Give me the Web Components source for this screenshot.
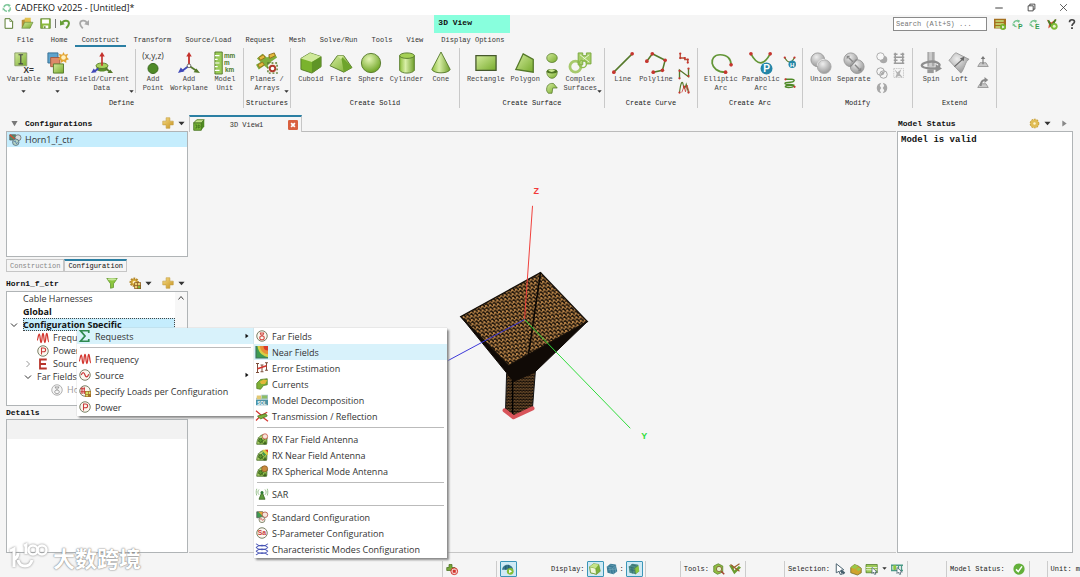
<!DOCTYPE html>
<html lang="en">
<head>
<meta charset="utf-8">
<title>CADFEKO v2025 - [Untitled]*</title>
<style>
  html, body { margin: 0; height: 100%; }
  body { overflow: hidden; background: #f5f5f5; }
</style>
</head>
<body>
<cad-app></cad-app>
<script>
const GREEN = '#8dbb3f', DARK = '#55792a', RED = '#c5362f';
const DEFS = `<defs>
<linearGradient id="g" x1="0" y1="0" x2="1" y2="1"><stop offset="0" stop-color="#d3eb9c"/><stop offset="1" stop-color="#77ab2c"/></linearGradient>
<radialGradient id="r" cx=".4" cy=".3" r=".7"><stop offset="0" stop-color="#e4f5b4"/><stop offset="1" stop-color="#6fa526"/></radialGradient>
<linearGradient id="c" x1="0" x2="1"><stop offset="0" stop-color="#8fc03e"/><stop offset=".4" stop-color="#d9efa8"/><stop offset="1" stop-color="#6f9f2c"/></linearGradient>
<radialGradient id="k" cx=".4" cy=".3" r=".8"><stop offset="0" stop-color="#eee"/><stop offset="1" stop-color="#8d8d8d"/></radialGradient>
<linearGradient id="y" x1="0" y1="0" x2="1" y2="1"><stop offset="0" stop-color="#f7dc83"/><stop offset="1" stop-color="#c69322"/></linearGradient></defs>`;
const dots = (...p) => p.map(([x, y, r = 1.5]) => `<circle cx="${x}" cy="${y}" r="${r}" fill="${RED}"/>`).join('');
const letter = (t, x, y, s, c) => `<text x="${x}" y="${y}" font-family="Liberation Sans" font-size="${s}" font-weight="700" fill="${c}" text-anchor="middle">${t}</text>`;
const rx = extra => `<path d="M1 15c0-7 4-12 9-13l5 4c-1 4 0 7-1 9z" fill="url(#g)" stroke="#3f6420"/><path d="M3 11l8-7M5 14l8-7M3 6l8 9" stroke="#3f6420"/><circle cx="6" cy="10" r="2.5" fill="#5d9a2b" stroke="#2f5316"/>${extra}`;
const ring = `<circle cx="8" cy="8" r="7" fill="#fbf7ef" stroke="#6c7256" stroke-width="1.2"/>`;
const swirl = c => `<path d="M3 7a5 5 0 0 1 8-3M13 7a5 5 0 0 1-1 5M8 13a5 5 0 0 1-5-3" fill="none" stroke="${c}" stroke-width="2.4"/><path d="M9 1l5 2-3 4zM15 10l-4 5-2-4zM1 12V7l4 3z" fill="${c}"/>`;

/* Small icons use a 16-unit box, ribbon icons a 24-unit box. */
const SMALL = {
  logo: swirl('#7fc79b'),
  new: `<path d="M3 1h7l4 4v10H3z" fill="#fff" stroke="${DARK}" stroke-width="1.4"/><path d="M10 1v4h4" fill="none" stroke="${DARK}"/>`,
  open: `<path d="M1 14V4l5-1 2 2h5v9z" fill="#b7913a"/><path d="M5 1h8v7H5z" fill="#e2c14e"/><path d="M1 15l4-8h11l-4 8z" fill="url(#g)" stroke="${DARK}" stroke-width=".7"/>`,
  save: `<path d="M1 1h14v14H1z" fill="${GREEN}" stroke="${DARK}"/><path d="M3 2h10v6H3zM5 11h7v4H5z" fill="#fff"/><path d="M6 12h2v3H6z" fill="${DARK}"/>`,
  undo: `<path d="M3 8c1-5 10-6 10 0 0 3-2 5-4 7" fill="none" stroke="#659d35" stroke-width="3"/><path d="M0 3v8l7-2z" fill="#659d35"/>`,
  redo: `<path d="M13 8C12 3 3 2 3 8c0 3 2 5 4 7" fill="none" stroke="#a9a9a9" stroke-width="2.6"/><path d="M16 3v8l-7-2z" fill="#a9a9a9"/>`,
  sheet: `<path d="M0 1h16v13H0z" fill="#a5701f"/><path d="M2 3h11v2H2zM2 7h11v2H2zM2 11h9v2H2z" fill="#c7e57c"/><circle cx="12" cy="12" r="4" fill="#75b52e"/><path d="M11 10l3 2-3 2z" fill="#fff"/>`,
  swirlP: `<g transform="scale(.85)">${swirl('#74c48e')}</g><circle cx="12" cy="11" r="5" fill="#f5f5f5"/>${letter('P', 12, 15, 10, '#329c52')}`,
  swirlE: `<g transform="scale(.85)">${swirl('#74c48e')}</g><circle cx="12" cy="11" r="5" fill="#f5f5f5"/>${letter('E', 12, 15, 10, '#329c52')}`,
  globe: `<path d="M1 2l6 4 7-5-3 7 4 5-7-3-5 4 1-6z" fill="#d5512f"/><path d="M3 3l4 8 6-9" stroke="#478229" stroke-width="2.4" fill="none"/><circle cx="11" cy="11" r="4.5" fill="#7dbb36"/><circle cx="11" cy="11" r="2" fill="#e7f5c8"/>`,
  help: `<path d="M4 5c0-5 8-5 8-.5 0 3-4 3-4 6.500" fill="none" stroke="#444" stroke-width="2.6"/><path d="M6.500 13h3v3h-3z" fill="#444"/>`,
  ellipse: `<ellipse cx="8" cy="8" rx="7" ry="6" fill="url(#g)" stroke="${DARK}"/>`,
  bowl: `<path d="M1 6c0 12 14 12 14 0z" fill="url(#g)" stroke="${DARK}"/><ellipse cx="8" cy="5.500" rx="7" ry="3" fill="#4e7423"/><path d="M3 5c3-3 7-2 9 0-3 2-6 2-9 0" fill="#c8e68e"/>`,
  patch: `<path d="M1 12C0 5 4 1 10 2l5 6-6 0-1 7H3z" fill="url(#g)" stroke="${DARK}"/>`,
  zig1: `<path d="M3 2v6h6v2h4v4" fill="none" stroke="#b5533a" stroke-width="1.800"/>${dots([3,2],[3,8],[9,8],[13,14],[13,10])}`,
  zig2: `<path d="M2 15V4l12 9V2" fill="none" stroke="${DARK}" stroke-width="1.8"/>${dots([2,15],[2,5],[14,12],[14,2])}`,
  zig3: `<path d="M2 14c2-16 4-16 5-10s2 6 4-1l3 11" fill="none" stroke="${DARK}" stroke-width="1.5"/><path d="M5 14l3-8 2 7 2-9 3 10" fill="none" stroke="${RED}"/>${dots([2,14],[8,6],[14,14])}`,
  hyper: `<path d="M1 2c4 8 9 8 13 0" fill="none" stroke="${DARK}" stroke-width="1.5"/><circle cx="11" cy="11" r="5" fill="#2386a8"/>${letter('H', 11, 14, 8, '#fff')}${dots([1,2],[14,2])}`,
  helix: `<path d="M2 3h8c6 0 4 4-2 4-9 0-9 3 0 3 8 0 6 4-2 4-6 0-6-3 2-3h6" fill="none" stroke="#4f8a28" stroke-width="1.800"/>${dots([2,3],[14,13])}`,
  sub: `<circle cx="10" cy="10" r="5" fill="#a9a9a9"/><circle cx="6" cy="6" r="5" fill="#f8f8f8" stroke="#999"/>`,
  inter: `<circle cx="6" cy="6" r="5" fill="none" stroke="#a5a5a5" stroke-width="1.300"/><circle cx="10" cy="10" r="5" fill="none" stroke="#a5a5a5" stroke-width="1.300"/><path d="M6 11c0-3 2-5 5-5 0 3-2 5-5 5" fill="#aaa"/>`,
  split: `<path d="M7 1c-8 1-8 13 0 14l-2-4 2-3-2-3zM9 1c8 1 8 13 0 14l2-4-2-3 2-3z" fill="#a8a8a8"/>`,
  grid: `<path d="M3 1v14M13 1v14M1 3h5M1 7h14M1 11h5M10 3h5M10 11h5M1 15h14" stroke="#9c9c9c" stroke-width="2"/>`,
  clip: `<path d="M1 2h13v12H1z" fill="none" stroke="#bcbcbc" stroke-dasharray="2 1"/><path d="M2 3l4 4 5-4-2 6 4 5-5-2-5 2 2-5z" fill="#b2b2b2"/>`,
  sweep1: `<path d="M1 14l3-5h8l3 5z" fill="#c9c9c9" stroke="#888"/><path d="M8 11V3" stroke="#777" stroke-width="1.500"/><path d="M5 4l3-4 3 4z" fill="#777"/>`,
  sweep2: `<path d="M1 14l3-5h8l3 5z" fill="#c9c9c9" stroke="#888"/><path d="M5 12c0-6 3-8 6-8" fill="none" stroke="#888" stroke-width="2.400"/><path d="M10 0l5 4-5 4z" fill="#888"/>`,
  plus: `<path d="M5.500 1h5v4.500H15v5h-4.500V15h-5v-4.500H1v-5h4.500z" fill="url(#y)" stroke="#c39c40" stroke-width=".8"/>`,
  down: `<path d="M1 4h14l-7 8z" fill="#333"/>`,
  downgrey: `<path d="M1 2h14l-7 12z" fill="#777"/>`,
  right: `<path d="M4 2l8 6-8 6z" fill="#111"/>`,
  rightgrey: `<path d="M3 1l10 7-10 7z" fill="#888"/>`,
  funnel: `<path d="M1 2h14l-5 7v5l-4 1V9z" fill="#8cc63f" stroke="#5f942b"/><ellipse cx="8" cy="3" rx="6" ry="1.500" fill="#c7e99b"/>`,
  gear: `<circle cx="8" cy="8" r="5.500" fill="#d9ae3c" stroke="#c39a35" stroke-width="3" stroke-dasharray="2.300 1.200"/><circle cx="8" cy="8" r="6" fill="#e0bd55"/><circle cx="8" cy="8" r="1.800" fill="#fff3cc"/>`,
  geargrid: `<circle cx="7" cy="7" r="4.800" fill="#d9ae3c" stroke="#b4872a" stroke-width="3" stroke-dasharray="2.300 1.200"/><circle cx="7" cy="7" r="1.800" fill="#fff3cc"/><path d="M7 7h9v9H7z" fill="#8a5a22"/><path d="M8 8h3v3H8zM12 8h3v3h-3zM8 12h3v3H8z" fill="#e9cf73"/><path d="M12 12h3v3h-3z" fill="#7cb53a"/>`,
  horn: `<path d="M1 1h8v7H1z" fill="#4e8f6a" stroke="#555"/><path d="M1 1l8 7" stroke="#d44b32" stroke-width="2"/><circle cx="12" cy="5" r="4" fill="#d6dcdc" stroke="#666"/><circle cx="9" cy="11" r="4.300" fill="#b5d3c2" stroke="#47627a"/><path d="M6 11l2-2 2 4 2-2" fill="none" stroke="#3f6ba5"/>`,
  cube: `<path d="M1 5l4-4h10v9l-4 5H1z" fill="#4f8a22"/><path d="M1 5h10v10H1z" fill="#78b438" stroke="#456f20"/><path d="M1 5l4-4h10l-4 4z" fill="#c2e388" stroke="#456f20"/><path d="M3 8h2v4H3M7 8c3 0 3 4 0 4z" fill="none" stroke="#3c6a1a"/>`,
  close: `<rect width="16" height="16" rx="2" fill="#d9603f"/><path d="M5 5l6 6M11 5l-6 6" stroke="#fff" stroke-width="2.800"/>`,
  wave: `<path d="M0 11c1.500 0 1.500-8 3-8s1 11 2.500 11S6.500 2 8 2s1 12 2.500 12S11.500 2 13 2s1 11 3 11" fill="none" stroke="#d3352e" stroke-width="1.700"/>`,
  power: ring + `<path d="M6 12.500V4h2.500c4 0 4 5 0 5H6" fill="none" stroke="#c93a3a" stroke-width="1.400"/>`,
  E: `<path d="M13 2H4v12h9M4 8h8" fill="none" stroke="#b8352c" stroke-width="2.400"/>`,
  sigma: `<path d="M13 4V1H2l6 7-6 7h11v-3" fill="none" stroke="#2f8a50" stroke-width="2.300"/>`,
  source: ring + `<path d="M3 8c2-5 4-3 5 0s3 4 5-1" fill="none" stroke="#c93a3a" stroke-width="1.600"/>`,
  loads: ring + `<path d="M4 3v9M2 5h6M2 9h6M7 3v9" stroke="#c93a3a" stroke-width="1.500"/><path d="M8 8h8v8H8z" fill="#a4712a"/><path d="M9 9h3v3H9zM13 9h2v3h-2zM9 13h3v2H9z" fill="#d6e36c"/>`,
  far: ring + `<path d="M5 4h6M6 4c0 4 4 4 4 0M8 8c-4 0-4 5 0 5s4-5 0-5" fill="none" stroke="#d14a42" stroke-width="1.400"/>`,
  fargrey: `<circle cx="8" cy="8" r="7" fill="#f6f6f6" stroke="#999"/><path d="M5 4h6M6 4c0 4 4 4 4 0M8 8c-4 0-4 5 0 5s4-5 0-5" fill="none" stroke="#999" stroke-width="1.300"/>`,
  near: `<path d="M0 0h16v16H0z" fill="#3e9c51"/><path d="M2 0h14v15C11 14 3 10 2 0z" fill="#d9cf45"/><path d="M5 0h11v11C11 11 6 7 5 0z" fill="#e88f37"/><path d="M10 0h6v6c-4 0-6-2-6-6z" fill="#d83c2d"/><path d="M0 0v16h16" fill="none" stroke="#3c7161" stroke-width="1.500"/>`,
  error: `<path d="M2 2v12M0 2h4M0 14h4M8 4v9M6 4h4M6 13h4M14 1v10M12 1h4M12 11h4" stroke="#7a4a35" stroke-width="1.300"/><path d="M2 9l6-2 6-2" stroke="#d3352e" stroke-width="2" fill="none"/>`,
  currents: `<path d="M1 7l5-5 9-1v8l-5 1-4 5-5-1z" fill="#7fb035" stroke="#4d7b20"/><path d="M5 5l5-3 5 1-3 5H7z" fill="#e3b73a"/>`,
  decomp: `<path d="M0 5h7V1h9v13H0z" fill="#a8c6cf"/><path d="M1 2h6v5H1z" fill="#e3c873"/><path d="M8 2h7v4H8z" fill="#8dbd63"/><path d="M0 8h16v7H0z" fill="#4c93a4"/>${letter('SOL', 8, 14, 6, '#fff')}`,
  trans: `<path d="M0 1l7 6 8-4M0 14l6-6M8 9l8 6" stroke="#d3352e" stroke-width="1.600" fill="none"/><path d="M2 8l11-3 2 3-9 4z" fill="#7db13c" stroke="#46701f"/>`,
  rxfar: rx(`<circle cx="12" cy="4.500" r="3.500" fill="#f6e5da" stroke="#c94d40"/><path d="M10 15l2-5 2 5z" fill="#3f6420"/>`),
  rxnear: rx(`<path d="M9 1h7v7H9z" fill="#d9cf45"/><path d="M12 1h4v4z" fill="#d83c2d"/><path d="M9 3l5 5H9z" fill="#3e9c51"/><path d="M10 15l2-5 2 5z" fill="#3f6420"/>`),
  rxsph: rx(`<circle cx="11.500" cy="5" r="4" fill="#c98a3f" stroke="#8a5b22"/><path d="M10 15l2-5 2 5z" fill="#3f6420"/>`),
  sar: `<path d="M8 5l4 10H4z" fill="#5d9a3b" stroke="#33601c"/><circle cx="8" cy="6" r="2" fill="#2e7a36"/><path d="M4 2c-2 2-2 5 0 7M12 2c2 2 2 5 0 7M1 1c-1 3-1 6 0 9M15 1c1 3 1 6 0 9" fill="none" stroke="#8fba82" stroke-width="1.200"/>`,
  std: `<path d="M1 1h8v8H1z" fill="#3e9c51" stroke="#555"/><path d="M3 1h6v6z" fill="#e0a63a"/><circle cx="12" cy="5" r="3.700" fill="#f6e5da" stroke="#a8483e"/><circle cx="8" cy="11.500" r="4" fill="#f1ece0" stroke="#6c7256"/><path d="M5.500 11.500c1-3 2-1 2.500 0s1.500 2 2.500-1" fill="none" stroke="#c93a3a"/>`,
  spar: ring + letter('Sa', 8, 11, 9, '#c93a3a'),
  modes: `<path d="M0 1c4 4 12 4 16 0M0 6c4-4 12-4 16 0M0 6c4 4 12 4 16 0M0 11c4-4 12-4 16 0M0 11c4 4 12 4 16 0M0 16c4-4 12-4 16 0" fill="none" stroke="#4754b5" stroke-width="1.400"/>`,
  stop: `<path d="M1 10V6h3V2h4v4h4v4z" fill="#78a93a" stroke="#4a6e20"/><circle cx="11" cy="11" r="4.500" fill="#f4d6d2" stroke="#d3352e" stroke-width="1.300"/><path d="M9 9h4v4H9z" fill="#d3352e"/>`,
  dome: `<path d="M0 9c1-9 14-9 15 0z" fill="#35758b"/><path d="M5 9V4M9 9V3" stroke="#1f4e60"/><circle cx="11" cy="11" r="4.500" fill="#86bd35"/><path d="M9.500 8.500l4 2.500-4 2.500z" fill="#fff"/>`,
  solid: `<path d="M1 5l5-4 7 1 2 9-5 4-8-2z" fill="#7db13a" stroke="#6d982f"/><path d="M1 5l8 2 1 8-8-2z" fill="#f0f7d8" stroke="#6d982f"/><path d="M1 5l5-4 7 1-4 5z" fill="#c5e48a"/>`,
  mesh: `<path d="M1 5l5-4 7 1 2 9-5 4-8-2z" fill="#3a7c97"/><path d="M1 5l8 2 5-4M9 7l1 8M4 2l7 2M3 9l11-1M5 6l1 8M12 5l1 8" stroke="#7fb0c2" fill="none" stroke-width=".7"/>`,
  meshsolid: `<path d="M1 5l5-4 7 1 2 9-5 4-8-2z" fill="#4d8d85"/><path d="M8 7l6-4 1 8-5 4z" fill="#8cc63f"/><path d="M1 5l8 2 5-4M9 7l1 8M4 2l7 2M3 9l6 1M5 6l1 8" stroke="#28586a" fill="none" stroke-width=".7"/>`,
  zoom: `<path d="M1 4l6-3 6 3v8l-7 3-5-3z" fill="#8fbd42" stroke="#5a812a"/><circle cx="8" cy="8" r="3.500" fill="#e5f1cc" stroke="#795525"/><path d="M11 11l4 4" stroke="#a2442f" stroke-width="2"/>`,
  brush: `<path d="M0 3l7 12 9-9-3-2-6 6-2-7z" fill="#6a9c2f"/><path d="M2 2l12 9M5 7l9-6" stroke="#9d5f2b" stroke-width="1.500"/>`,
  cursor: `<path d="M3 1l10 8-4 1 2 5-3 0-1-4-4 2z" fill="#fff" stroke="#47606d" stroke-width="1.300"/><path d="M9 10l5 4" stroke="#47606d" stroke-width="3"/>`,
  parts: `<path d="M1 6l5-4 5 2 4 3v6l-5 3-9-3z" fill="#cfa42d" stroke="#6a6a22"/><path d="M1 6l5-4 5 2-4 4zM8 8l4-2 3 2-4 3z" fill="#98c84a"/>`,
  table: `<path d="M0 2h15v11H0z" fill="#9cc956" stroke="#4f7b2a"/><path d="M0 6h15M0 9h15" stroke="#fff"/><path d="M8 6l7 6-3 0 1 3h-2l-1-3-2 2z" fill="#fff" stroke="#47606d"/>`,
  picks: `<path d="M1 2v9M5 2v9M10 2v9M14 2v9M0 3h16M0 10h16" stroke="#4b9a86" stroke-width="1.700"/><path d="M3 3h4v6H3z" fill="#8cc63f"/><path d="M8 6l7 6-3 0 1 3h-2l-1-3-2 2z" fill="#fff" stroke="#47606d"/>`,
  ok: `<circle cx="8" cy="8" r="7.500" fill="#63b03a"/><path d="M4 8.500l3 3 5-7" fill="none" stroke="#fff" stroke-width="2"/>`,
  min: `<path d="M2 8h12" stroke="#333" stroke-width="1.500"/>`,
  max: `<path d="M2 5h9v9H2zM5 5V2h9v9h-3" fill="none" stroke="#333" stroke-width="1.500"/>`,
  x: `<path d="M2 2l12 12M14 2L2 14" stroke="#333" stroke-width="1.400"/>`,
  up: `<path d="M3 11l5-6 5 6" fill="none" stroke="#444" stroke-width="2"/>`,
  open2: `<path d="M2 5l6 6 6-6" fill="none" stroke="#333" stroke-width="2"/>`,
  shut: `<path d="M5 2l6 6-6 6" fill="none" stroke="#999" stroke-width="2"/>`
};
const BIG = {
  variable: `<path d="M2 1h13v14H2z" fill="url(#g)" stroke="#8a9d68"/><path d="M8.500 3v10M6 3h5M6 13h5" stroke="#444" stroke-width="1.300"/>${letter('X=', 17, 23, 9, '#333')}`,
  media: `<path d="M1 1h11v11H1z" fill="#5ea3cd" stroke="#356f93"/><path d="M4 6h10v10H4z" fill="#dd8a6a" stroke="#a3583b"/><path d="M18 0l1.500 3L23 2l-1.500 3.500L24 8l-3 1 0 3-3-2-3 2v-3l-3-1 2-2.500L13 2l3.500 1z" fill="#e3a332"/><circle cx="18" cy="6" r="2.500" fill="#fff0bd"/><path d="M7 13h11v10H7z" fill="url(#g)" stroke="${DARK}"/>`,
  field: `<path d="M6 15v4c2 3 10 3 12 0v-4z" fill="#5c8d2b"/><ellipse cx="12" cy="15" rx="6.500" ry="3" fill="#a8d25b" stroke="${DARK}"/><path d="M12 15V4" stroke="#c4302b" stroke-width="1.800"/><path d="M9 5l3-5 3 5z" fill="#c4302b"/><path d="M8 18l-4 3" stroke="#4149b8" stroke-width="2"/><path d="M0 23l3-5 3 4z" fill="#4149b8"/><path d="M16 18l4 3" stroke="#55792a" stroke-width="2"/><path d="M24 23l-6 0 3-4z" fill="#55792a"/>`,
  point: `<text x="12" y="8" font-family="Open Sans" font-size="9" fill="#333" text-anchor="middle">(x,y,z)</text><circle cx="12" cy="18" r="5.500" fill="#4f8a28" stroke="#36651a"/>`,
  workplane: `<path d="M12 15V4" stroke="#c4302b" stroke-width="2"/><path d="M9 5l3-5 3 5z" fill="#c4302b"/><path d="M12 15l-8 6" stroke="#4149b8" stroke-width="2"/><path d="M0 23l3-6 4 4z" fill="#4149b8"/><path d="M12 15l9 6" stroke="#55792a" stroke-width="2"/><path d="M24 23l-7-1 3-4z" fill="#55792a"/><circle cx="12" cy="15" r="2" fill="#fff" stroke="#666"/>`,
  unit: `<path d="M1 0h8v24H1z" fill="#9acb58" stroke="${DARK}"/><path d="M1 4h5M1 8h3M1 12h5M1 16h3M1 20h5" stroke="#fff" stroke-width="1.300"/>${letter('mm', 17, 6, 7, '#4d7b2a')}${letter('m', 14, 14, 7, '#4d7b2a')}${letter('km', 17, 22, 7, '#4d7b2a')}`,
  planes: `<path d="M1 7l6-5 5 4 8-5 3 5-7 5 4 5-6 3-5-4-6 4-3-5 5-3z" fill="#7fae3b"/><path d="M3 6l5-3 2 3-5 3zM14 3l6-2 1 3-6 3zM2 14l5-3 2 3-5 3z" fill="#e3b93c" stroke="#94701f"/><path d="M13 12h10v11H13z" fill="#f3efe3" stroke="${DARK}" stroke-width="1.500" stroke-dasharray="2 2"/><circle cx="18" cy="18" r="3" fill="#fff" stroke="#b13b2c" stroke-width="2"/>`,
  cuboid: `<path d="M1 7l10-6 12 4v11l-10 7-12-4z" fill="#7ab32d" stroke="${DARK}"/><path d="M1 7l12 4 10-6-12-4z" fill="#cfe99a"/><path d="M13 11l10-6v11l-10 7z" fill="#5f9426"/>`,
  flare: `<path d="M0 15l8-11 7 0 9 13-9 5z" fill="url(#g)" stroke="${DARK}"/><path d="M12 4l12 13-9 5z" fill="#6ea42c"/><path d="M8 4h7l-3 4z" fill="#d3eb9c"/>`,
  sphere: `<circle cx="12" cy="12" r="10.500" fill="url(#r)" stroke="${DARK}"/>`,
  cylinder: `<path d="M4 4v16c2 4 14 4 16 0V4z" fill="url(#c)" stroke="${DARK}"/><ellipse cx="12" cy="4" rx="8" ry="3" fill="#a5d055" stroke="${DARK}"/>`,
  cone: `<path d="M12 0L2 19c2 5 18 5 20 0z" fill="url(#c)" stroke="${DARK}"/>`,
  rectangle: `<path d="M1 4h22v16H1z" fill="url(#g)" stroke="#46592c" stroke-width="1.400"/>`,
  polygon: `<path d="M10 2l11 6v14L2 19z" fill="url(#g)" stroke="${DARK}" stroke-width="1.400"/>`,
  complex: `<circle cx="7" cy="16" r="6" fill="#f5f5f5" stroke="#a7c96d" stroke-width="3"/><path d="M10 1h5v3h4V1h5v12h-5v-3h-4v4h-5z" fill="#a7cf69" stroke="#78a63d"/><path d="M12 3l10 8M22 3l-10 8" stroke="#eef6df"/><circle cx="15" cy="13" r="4" fill="none" stroke="#8dbb4a" stroke-width="1.500"/>`,
  line: `<path d="M2 22L22 2" stroke="${DARK}" stroke-width="1.700"/>${dots([2,22,2],[22,2,2])}`,
  polyline: `<path d="M2 10l6-8 14 7-3 11-10 2" fill="none" stroke="${DARK}" stroke-width="1.700"/>${dots([2,10,2],[8,2,2],[22,9,2],[19,20,2],[9,22,2])}`,
  elliptic: `<path d="M17 22C-1 22-2 3 11 3c8 0 12 5 12 11" fill="none" stroke="#639637" stroke-width="1.900"/>${dots([17,22,2],[23,14,2])}`,
  parabolic: `<path d="M1 2c7 13 14 13 21 0" fill="none" stroke="#639637" stroke-width="1.900"/>${dots([1,2,2],[22,2,2])}<circle cx="18" cy="18" r="6.500" fill="#2386a8"/>${letter('P', 18, 22, 11, '#fff')}`,
  union: `<circle cx="8.500" cy="8.500" r="7.500" fill="url(#k)" stroke="#999"/><circle cx="15.500" cy="16" r="7.500" fill="url(#k)" stroke="#aaa"/><path d="M8 15c0-4 3-7 8-7" fill="none" stroke="#eee"/>`,
  separate: `<circle cx="8.500" cy="8.500" r="7.500" fill="url(#k)" stroke="#999"/><circle cx="15.500" cy="16" r="7.500" fill="url(#k)" stroke="#999"/><path d="M6 6l5 5M18 19l-5-5M15 8l-7 8" stroke="#888" stroke-width="1.500"/><path d="M4 8V4h4zM20 17v4h-4z" fill="#888"/>`,
  spin: `<path d="M8 0h8v16H8z" fill="#aaa"/><path d="M10 0h3v16h-3z" fill="#ccc"/><path d="M19 17c7-4-3-8-11-6s-9 6 3 7h8" fill="none" stroke="#8e8e8e" stroke-width="2.600"/><path d="M17 13l7 5-7 4z" fill="#8e8e8e"/><path d="M8 19h7v4H8z" fill="#999"/>`,
  loft: `<path d="M1 9C4 7 6 1 9 1l14 7c-4 1-5 11-9 15z" fill="url(#k)" stroke="#999"/><path d="M7 16L17 7" stroke="#666" stroke-width="1.300"/><path d="M18 5l-1 5-4-3z" fill="#666"/>`
};

/* Base class: renders its template once into an open shadow root. */
class Base extends HTMLElement {
  connectedCallback() {
    if (this.shadowRoot) return;
    const t = document.createElement('template');
    t.innerHTML = `<style>*{box-sizing:border-box}button{font:inherit;color:inherit;background:none;border:0;padding:0;margin:0;text-align:left}${this.css()}</style>${this.html()}`;
    this.attachShadow({ mode: 'open' }).append(t.content.cloneNode(true));
  }
  at(n, d = '') { return this.getAttribute(n) ?? d; }
}

customElements.define('cad-icon', class extends Base {
  css() { const s = this.at('size', '12'); return `:host{display:inline-block;flex:none;width:${s}px;height:${s}px}svg{display:block;width:100%;height:100%;overflow:visible}`; }
  html() {
    const n = this.at('name'), big = n in BIG, u = big ? 24 : 16;
    return `<svg viewBox="0 0 ${u} ${u}" aria-hidden="true">${DEFS}${big ? BIG[n] : SMALL[n]}</svg>`;
  }
});

customElements.define('title-bar', class extends Base {
  css() { return `:host{display:flex;align-items:center;height:15px;background:#fff;font:9px "Open Sans",sans-serif;color:#111;padding:0 12px 0 2px}
    span{flex:1;margin-left:3px}.w{display:flex;gap:23px}button{display:flex}`; }
  html() { return `<cad-icon name="logo" size="10"></cad-icon><span><slot></slot></span>
    <div class="w"><button aria-label="Minimize"><cad-icon name="min" size="10"></cad-icon></button><button aria-label="Restore"><cad-icon name="max" size="9"></cad-icon></button><button aria-label="Close"><cad-icon name="x" size="9"></cad-icon></button></div>`; }
});

customElements.define('ribbon-tab', class extends Base {
  css() { return `:host{display:block}button{display:block;height:14px;line-height:14px;padding:0 7px;border-bottom:2px solid transparent;white-space:nowrap}
    :host([active]) button{border-color:#2b7fa3}`; }
  html() { return `<button><slot></slot></button>`; }
});

customElements.define('ribbon-header', class extends Base {
  css() { return `:host{display:flex;height:33px;color:#333}
    .q{display:flex;align-items:center;height:18px;padding:0 0 2px 3px;gap:7px}
    .q i{width:1px;height:9px;background:#777;margin:0 -3px}
    .q button{display:flex}
    .tabs{display:flex;padding-left:10px;height:15px}.tabs :first-child{margin-right:3px}
    .ctx{margin-left:4px}
    .ctx b{display:block;height:18px;line-height:15px;padding-left:4px;background:#88ffdd;color:#111;font-size:8px;margin-right:1px}
    .r{margin-left:auto;display:flex;align-items:center;height:18px;padding-right:3px;gap:6px}
    input{width:94px;height:14px;border:1px solid #8a8a8a;background:#fff;font:inherit;padding:0 2px;margin-right:1px;border-radius:0}
    input::placeholder{color:#777;opacity:1}.r button:last-child{margin-left:3px}.r button{display:flex}`; }
  html() {
    const b = (n, l, s = 11) => `<button aria-label="${l}"><cad-icon name="${n}" size="${s}"></cad-icon></button>`;
    const t = (s, a = '') => `<ribbon-tab ${a}>${s}</ribbon-tab>`;
    return `<div><div class="q">${b('new','New')}${b('open','Open',12)}${b('save','Save')}<i></i>${b('undo','Undo')}${b('redo','Redo')}</div>
      <div class="tabs">${t('File')}${t('Home')}${t('Construct','active')}${['Transform','Source/Load','Request','Mesh','Solve/Run','Tools','View'].map(x => t(x)).join('')}</div></div>
      <div class="ctx"><b>3D View</b>${t('Display Options')}</div>
      <div class="r"><input aria-label="Search" placeholder="Search (Alt+S) ...">${b('sheet','Solver',12)}${b('swirlP','POSTFEKO')}${b('swirlE','EDITFEKO')}${b('globe','Online',12)}${b('help','Help',10)}</div>`;
  }
});

customElements.define('ribbon-tool', class extends Base {
  css() { return `:host{display:block}button{position:relative;display:flex;flex-direction:column;align-items:center;text-align:center;line-height:9px;white-space:pre}
    cad-icon{margin-bottom:1px}.a{position:absolute;right:-5px;top:37px}:host([arrow=mid]) .a{right:auto}`; }
  html() { return `<button><cad-icon name="${this.at('icon')}" size="22"></cad-icon><span>${this.at('label').replace('|', '\n')}</span>${this.hasAttribute('arrow') ? '<cad-icon class="a" name="down" size="5"></cad-icon>' : ''}</button>`; }
});

customElements.define('tool-column', class extends Base {
  css() { return `:host{display:flex;flex-direction:column;gap:3px}:host([wide]){gap:9px;padding-top:4px}button{display:flex}`; }
  html() { return this.at('icons').split(' ').map(n => `<button aria-label="${n}"><cad-icon name="${n}" size="12"></cad-icon></button>`).join(''); }
});

customElements.define('ribbon-group', class extends Base {
  css() { return `:host{display:flex;flex-direction:column;min-width:${this.at('width')}px;height:60px;border-right:1px solid #c9c9c9;padding:4px 4px 0}
    .t{display:flex;justify-content:space-around;flex:1}.n{text-align:center;line-height:9px;color:#222;white-space:nowrap;margin:0 -3px}
    ::slotted(hr){width:1px;height:44px;margin:-3px 0 0;border:0;background:#c9c9c9}`; }
  html() { return `<div class="t"><slot></slot></div><div class="n">${this.at('name')}</div>`; }
});

customElements.define('cad-ribbon', class extends Base {
  css() { return `:host{display:flex;color:#444;height:60px}`; }
  html() {
    const g = (n, w, s) => `<ribbon-group name="${n}" width="${w}">${s}</ribbon-group>`;
    const t = (i, l, a = '') => `<ribbon-tool icon="${i}" label="${l}" ${a}></ribbon-tool>`;
    const c = (s, a = '') => `<tool-column icons="${s}" ${a}></tool-column>`;
    return g('Define', 244, t('variable','Variable','arrow="mid"') + t('media','Media','arrow="mid"') + t('field','Field/Current|Data','arrow') + '<hr>' + t('point','Add|Point') + t('workplane','Add|Workplane') + t('unit','Model|Unit'))
      + g('Structures', 47, t('planes','Planes /|Arrays','arrow'))
      + g('Create Solid', 169, t('cuboid','Cuboid') + t('flare','Flare') + t('sphere','Sphere') + t('cylinder','Cylinder') + t('cone','Cone'))
      + g('Create Surface', 145, t('rectangle','Rectangle') + t('polygon','Polygon') + c('ellipse bowl patch') + t('complex','Complex|Surfaces','arrow'))
      + g('Create Curve', 93, t('line','Line') + t('polyline','Polyline') + c('zig1 zig2 zig3'))
      + g('Create Arc', 105, t('elliptic','Elliptic|Arc') + t('parabolic','Parabolic|Arc') + c('hyper helix', 'wide'))
      + g('Modify', 110, t('union','Union') + t('separate','Separate') + c('sub inter split') + c('grid clip'))
      + g('Extend', 84, t('spin','Spin') + t('loft','Loft') + c('sweep1 sweep2', 'wide'));
  }
});

/* A dock header: bold caption, with its action buttons in the slot. */
customElements.define('dock-head', class extends Base {
  css() { return `:host{display:flex;align-items:center;height:16px;font-weight:700;font-size:8px;color:#111}
    b{flex:1}div{display:flex;align-items:center;gap:4px}`; }
  html() { return `<slot name="lead"></slot><b>${this.at('caption')}</b><div><slot></slot></div>`; }
});

customElements.define('tree-row', class extends Base {
  css() { return `:host{display:flex;align-items:center;height:13px;padding-left:${this.at('indent', '0')}px;white-space:nowrap;color:#333;font:9px "Open Sans",sans-serif}
    :host([bold]){font-weight:700;color:#111}:host([grey]){color:#999}
    .x{width:${this.at('twist') ? 8 : 0}px;display:flex;margin-right:${this.at('twist') ? 5 : 0}px}
    :host([selected]) .s{background:#c5edfd;outline:1px dotted #444;outline-offset:-1px;flex:1}
    .s{display:flex;align-items:center;gap:4px;height:13px}`; }
  html() { return `<span class="x">${this.at('twist') ? `<cad-icon name="${this.at('twist')}" size="8"></cad-icon>` : ''}</span><span class="s">${this.at('icon') ? `<cad-icon name="${this.at('icon')}" size="12"></cad-icon>` : ''}<slot></slot></span>`; }
});

customElements.define('left-dock', class extends Base {
  css() { return `:host{display:flex;flex-direction:column;width:189px;padding:0 1px 0 6px;flex:none}
    .box{background:#fff;border:1px solid #b0b4b6}
    .list{height:126px}.item{display:flex;width:100%;align-items:center;gap:4px;height:15px;padding-left:2px;background:#c5edfd;color:#333;font:9px "Open Sans",sans-serif}
    .tabs{display:flex;height:13px;margin-top:2px}.tabs button{height:13px;line-height:12px;padding:0 3px;border:1px solid #c6c6c6;color:#888}
    .tabs .on{border-top:2px solid #2b7fa3;color:#111;line-height:11px}
    .second{margin-top:3px}.tree{height:115px;display:flex;overflow:hidden}.rows{flex:1;min-width:0}
    .bar{width:12px;background:#f7f7f7;display:flex;justify-content:center;padding-top:2px}
    .details{flex:1}.details div{height:19px;background:#f2f2f2}
    dock-head.d{height:13px}`; }
  html() { return `
    <dock-head caption="Configurations"><cad-icon slot="lead" name="downgrey" size="7" style="margin:0 7px 0 5px"></cad-icon><cad-icon name="plus" size="12"></cad-icon><cad-icon name="down" size="7" style="margin-right:3px"></cad-icon></dock-head>
    <div class="box list"><button class="item"><cad-icon name="horn" size="12"></cad-icon>Horn1_f_ctr</button></div>
    <div class="tabs"><button>Construction</button><button class="on">Configuration</button></div>
    <dock-head class="second" caption="Horn1_f_ctr"><cad-icon name="funnel" size="12" style="margin-right:7px"></cad-icon><cad-icon name="geargrid" size="12"></cad-icon><cad-icon name="down" size="7" style="margin-right:6px"></cad-icon><cad-icon name="plus" size="12"></cad-icon><cad-icon name="down" size="7" style="margin-right:3px"></cad-icon></dock-head>
    <div class="box tree"><div class="rows">
      <tree-row indent="16">Cable Harnesses</tree-row>
      <tree-row indent="16" bold>Global</tree-row>
      <tree-row indent="3" twist="open2" bold selected>Configuration Specific</tree-row>
      <tree-row indent="30" icon="wave">Frequency</tree-row>
      <tree-row indent="30" icon="power">Power</tree-row>
      <tree-row indent="17" twist="shut" icon="E">Sources</tree-row>
      <tree-row indent="17" twist="open2">Far Fields</tree-row>
      <tree-row indent="44" icon="fargrey" grey>Horn1</tree-row>
    </div><div class="bar"><cad-icon name="up" size="8"></cad-icon></div></div>
    <dock-head class="d" caption="Details"></dock-head>
    <div class="box details"><div></div></div>`; }
});

/* The 3D view: horn antenna with its mesh, and the X, Y and Z axes. */
customElements.define('model-view', class extends Base {
  css() { return `:host{display:flex;flex-direction:column;flex:1;min-width:0}
    .tabs{display:flex;height:17px}.tab{display:flex;align-items:center;justify-content:space-between;width:113px;padding:0 3px;border:1px solid #c6c6c6;border-top:2px solid #2b7fa3;border-bottom:0}
    .rest{flex:1;border-bottom:1px solid #bbb}.tab button{display:flex}
    svg{display:block;flex:1;min-height:0;width:100%;border-bottom:1px solid #c6c6c6}text{font:700 9px "Liberation Sans",sans-serif}`; }
  html() { return `<div class="tabs"><div class="tab"><cad-icon name="cube" size="12"></cad-icon><span>3D View1</span><button aria-label="Close"><cad-icon name="close" size="10"></cad-icon></button></div><div class="rest"></div></div>
  <svg viewBox="190 132 706 421" role="img" aria-label="Horn antenna model">
    <defs><pattern id="m" width="4" height="4" patternUnits="userSpaceOnUse" patternTransform="rotate(-8)"><rect width="4" height="4" fill="#1c130a"/><path d="M0 0h3L1.500 2zM2 2h2v2h-2z" fill="#b78348"/><path d="M0 3h1v1H0z" fill="#7f5a30"/></pattern>
    <pattern id="n" width="3" height="3" patternUnits="userSpaceOnUse"><rect width="3" height="3" fill="#150e08"/><path d="M0 0h1v1H0zM1 2h2v1H1z" fill="#94693a"/></pattern></defs>
    <path d="M507 374L536 370 533 408 513 417 506 410z" fill="url(#n)" stroke="#111"/>
    <path d="M513 380V417" stroke="#000" stroke-width="1.500"/>
    <path d="M505 411l9 7 19-9" fill="none" stroke="#d8545a" stroke-width="4" stroke-linejoin="round" stroke-linecap="round"/>
    <path d="M461 317L509 365 588 322 535 373 514 382z" fill="#100a06" stroke="#100a06"/>
    <path d="M541 273L461 317 509 366 588 322z" fill="url(#m)" stroke="#16100a" stroke-width="1.300"/>
    <path d="M541 273L529 355" stroke="#0c0805" stroke-width="1.600"/>
    <path d="M533 206L525 320" stroke="#f0403c"/>
    <path d="M525 320L400 387" stroke="#3c38d8"/>
    <path d="M525 320L631 429" stroke="#2fdc3a"/>
    <text x="534" y="194" fill="#f23a3a">Z</text><text x="642" y="440" fill="#2fdc3a">Y</text>
  </svg>`; }
});

customElements.define('status-dock', class extends Base {
  css() { return `:host{display:flex;flex-direction:column;width:184px;padding:0 7px 0 1px;flex:none}
    .box{flex:1;background:#fff;border:1px solid #b0b4b6;padding:3px;font-weight:700;font-size:9px;color:#111}dock-head{padding-left:1px}`; }
  html() { return `<dock-head caption="Model Status"><cad-icon name="gear" size="11"></cad-icon><cad-icon name="down" size="7" style="margin-right:6px"></cad-icon><cad-icon name="rightgrey" size="7" style="margin-right:5px"></cad-icon></dock-head><div class="box">Model is valid</div>`; }
});

customElements.define('menu-item', class extends Base {
  css() { return `:host{display:block}button{display:flex;width:100%;height:16px;align-items:center;gap:4px;padding:0 4px 0 2px;white-space:nowrap}
    :host([active]) button{background:#d8f2fb}span{flex:1}`; }
  html() { return `<button role="menuitem"><cad-icon name="${this.at('icon')}" size="12"></cad-icon><span><slot></slot></span>${this.hasAttribute('sub') ? '<cad-icon name="right" size="6"></cad-icon>' : ''}</button>`; }
});

customElements.define('popup-menu', class extends Base {
  css() { return `:host{display:block;background:#fff;color:#333;font:9px "Open Sans",sans-serif;box-shadow:2px 2px 2px #8a8a8a,0 0 1px #aaa;padding-bottom:1px}
    ::slotted(hr){height:1px;margin:3px 3px;border:0;background:#bbb}`; }
  html() { return `<slot></slot>`; }
});

customElements.define('status-bar', class extends Base {
  css() { return `:host{display:flex;justify-content:flex-end;align-items:center;height:17px;color:#222;overflow:hidden}
    section{display:flex;align-items:center;gap:4px;height:16px;margin-right:38px;white-space:nowrap;flex:none}
    .l{border-left:1px solid #ccc;padding-left:3px}.e{border-right:1px solid #ccc;padding-right:4px}
    .display{gap:2px;padding-right:2px}.unit{margin:0 0 0 -21px}
    button{display:flex}.on{width:17px;height:16px;justify-content:center;align-items:center;background:#cfeaf5;border:1px solid #3b96b8;border-radius:1px}`; }
  html() {
    const b = (n, c = '') => `<button class="${c}" aria-label="${n}"><cad-icon name="${n}" size="12"></cad-icon></button>`;
    return `<section class="l">${b('stop')}</section>
      <section class="l" style="margin-right:34px">${b('dome','on')}</section>
      <section class="e display" style="margin-right:34px">Display:${b('solid','on')}${b('mesh')}:${b('meshsolid','on')}</section>
      <section class="l e">Tools:${b('zoom')}${b('brush')}</section>
      <section class="l e">Selection:${b('cursor')}${b('parts')}${b('table')}<cad-icon name="down" size="5"></cad-icon>${b('picks')}</section>
      <section class="l e">Model Status:<i></i>${b('ok')}</section>
      <section class="l unit">Unit: m</section>`;
  }
});

/* Watermark: a looped mark and the site name. */
customElements.define('site-mark', class extends Base {
  css() { return `:host{display:flex;align-items:center;gap:6px;color:#fff;font:700 22px/26px "Noto Sans CJK SC",sans-serif;text-shadow:0 0 2px #777,0 0 1px #999;pointer-events:none}
    svg{width:38px;height:26px;overflow:visible;filter:drop-shadow(0 0 1px #888)}`; }
  html() { return `<svg viewBox="0 0 38 26" fill="none" stroke="#fff" stroke-width="3"><path d="M1 7l4-2v18M5 15c2 0 4-3 4-6M9 16c2 8 12 8 14 0M15 2l2-1v9"/><circle cx="24" cy="6" r="4.500" stroke-width="2.500"/><circle cx="33" cy="6" r="4.500" stroke-width="2.500"/></svg><span>大数跨境</span>`; }
});

customElements.define('cad-app', class extends Base {
  css() { return `:host{display:flex;flex-direction:column;height:100vh;position:relative;overflow:hidden;background:#f5f5f5;font:7px "Liberation Mono",monospace;color:#333}
    main{display:flex;flex:1;min-height:0;margin:7px 0}
    .ctx{position:absolute;left:77px;top:328px;width:177px}.sub{position:absolute;left:254px;top:328px;width:193px}
    site-mark{position:absolute;left:9px;bottom:7px}`; }
  html() {
    const m = (i, l, a = '') => `<menu-item icon="${i}" ${a}>${l}</menu-item>`;
    return `<title-bar>CADFEKO v2025 - [Untitled]*</title-bar><ribbon-header></ribbon-header><cad-ribbon></cad-ribbon>
    <main><left-dock></left-dock><model-view></model-view><status-dock></status-dock></main>
    <status-bar></status-bar>
    <popup-menu class="ctx" role="menu">${m('sigma','Requests','active sub')}<hr>${m('wave','Frequency')}${m('source','Source','sub')}${m('loads','Specify Loads per Configuration')}${m('power','Power')}</popup-menu>
    <popup-menu class="sub" role="menu">${m('far','Far Fields')}${m('near','Near Fields','active')}${m('error','Error Estimation')}${m('currents','Currents')}${m('decomp','Model Decomposition')}${m('trans','Transmission / Reflection')}<hr>${m('rxfar','RX Far Field Antenna')}${m('rxnear','RX Near Field Antenna')}${m('rxsph','RX Spherical Mode Antenna')}<hr>${m('sar','SAR')}<hr>${m('std','Standard Configuration')}${m('spar','S-Parameter Configuration')}${m('modes','Characteristic Modes Configuration')}</popup-menu>
    <site-mark></site-mark>`;
  }
});
</script>
</body>
</html>
